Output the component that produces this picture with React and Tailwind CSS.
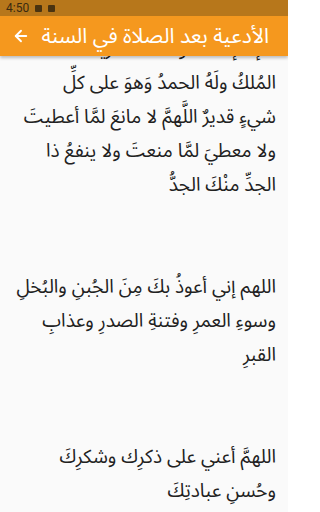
import { ArrowLeft } from 'lucide-react';

const ARABIC_FONT = { fontFamily: '"Noto Sans Arabic", "DejaVu Sans", "Noto Sans", sans-serif' };

// each dua is kept as the lines the screen wraps it into
const DUAS = [
  [
    'لا إلهَ إلا اللهُ وحدَهُ لا شريكَ لهُ، لهُ',
    'المُلكُ ولَهُ الحمدُ وَهوَ على كلِّ',
    'شيءٍ قديرٌ اللَّهمَّ لا مانعَ لمَّا أعطيتَ',
    'ولا معطيَ لمَّا منعتَ ولا ينفعُ ذا',
    'الجدِّ منْكَ الجدُّ',
  ],
  [
    'اللهم إني أعوذُ بكَ مِنَ الجُبنِ والبُخلِ',
    'وسوءِ العمرِ وفتنةِ الصدرِ وعذابِ',
    'القبرِ',
  ],
  [
    'اللهمَّ أعني على ذكرِك وشكرِكَ',
    'وحُسنِ عبادتِكَ',
  ],
];

function StatusBar() {
  return (
    <div className="flex h-4 items-center gap-1.5 bg-[#b7771b] px-1.5 text-[#3a2a10]">
      <span className="text-[12px] leading-none" style={{ fontFamily: 'Roboto, sans-serif' }}>4:50</span>
      <span className="h-[7px] w-[7px] rounded-[1px] bg-[#4a3310]" />
      <span className="h-[7px] w-[7px] rounded-[1px] bg-[#4a3310]" />
    </div>
  );
}

export default function App() {
  return (
    <div className="flex h-[512px] w-[288px] flex-col overflow-hidden bg-[#fafafa]">
      <div className="relative z-10 shadow-[0_2px_3px_rgba(0,0,0,0.25)]">
        <StatusBar />
        <div className="flex h-10 items-center bg-[#f5981e] pl-3 pr-[19px]">
          <ArrowLeft className="h-[18px] w-[18px] text-white" strokeWidth={2.5} />
          <h1 dir="rtl" className="flex-1 whitespace-nowrap text-right text-[21px] leading-none text-white" style={ARABIC_FONT}>
            الأدعية بعد الصلاة في السنة
          </h1>
        </div>
      </div>
      <div className="flex-1 overflow-hidden">
        <div dir="rtl" className="-mt-[24px] px-3 text-[19px] leading-[34px] text-[#212121]" style={ARABIC_FONT}>
          {DUAS.map((lines, i) => (
            <div key={i} className="mb-[68px]">
              {lines.map((line, j) => (
                <p key={j} className="whitespace-nowrap">{line}</p>
              ))}
            </div>
          ))}
        </div>
      </div>
    </div>
  );
}
